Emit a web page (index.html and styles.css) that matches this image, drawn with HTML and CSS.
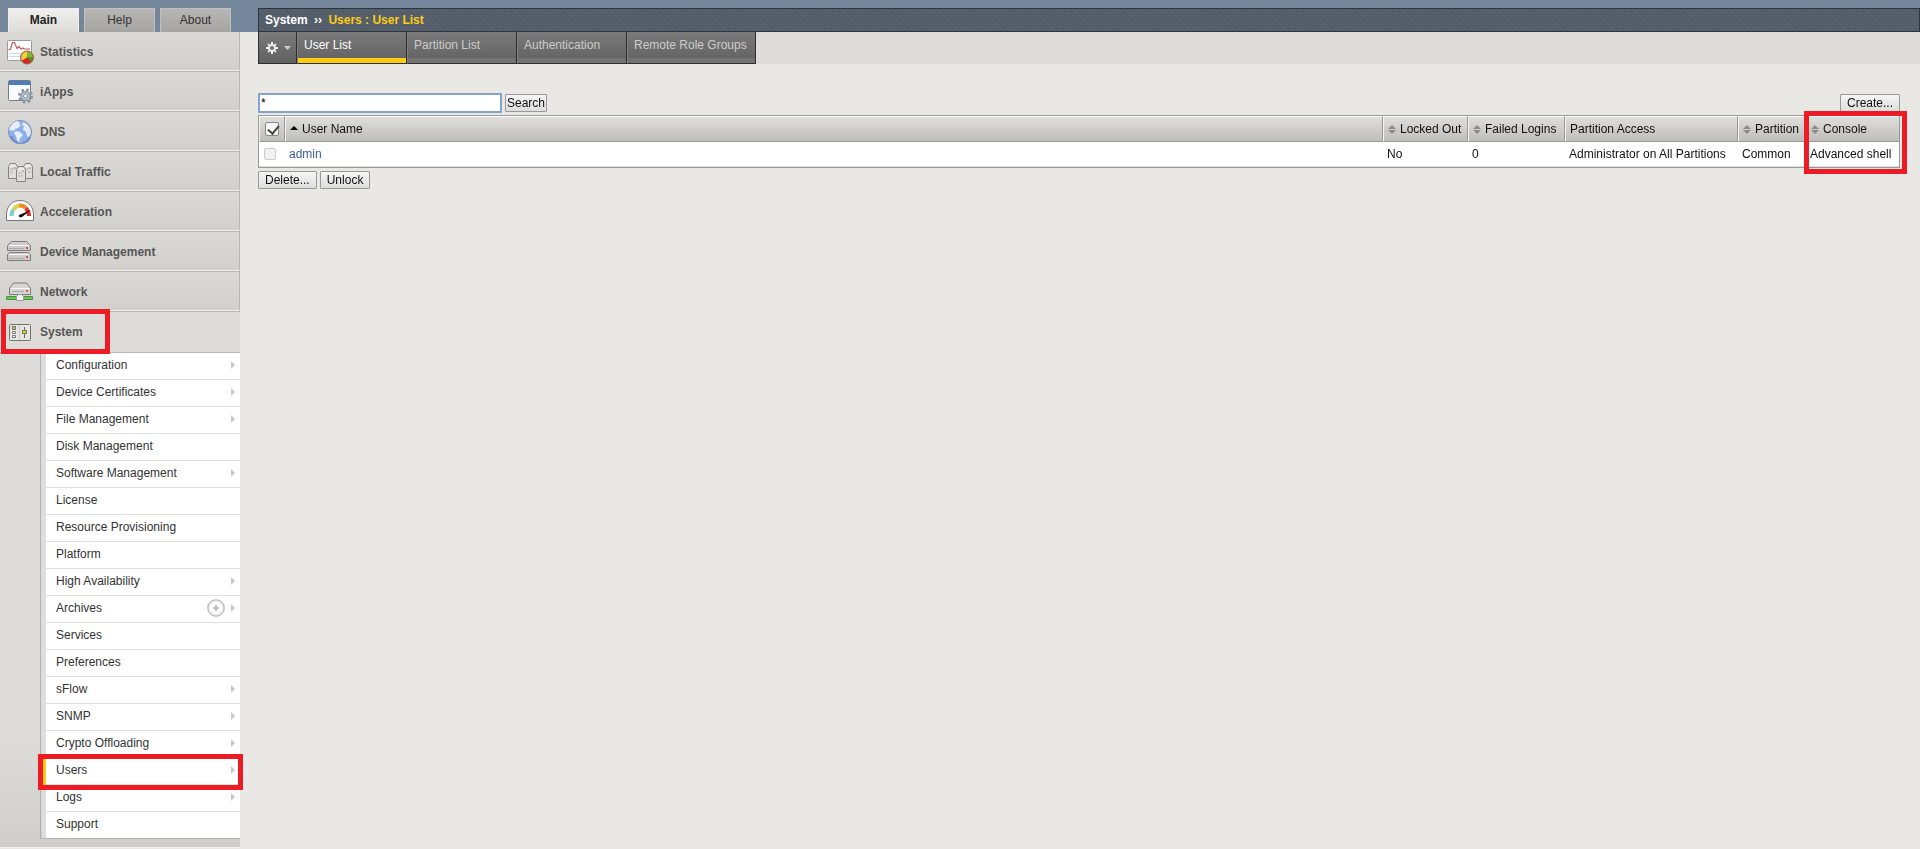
FILE: index.html
```html
<!DOCTYPE html>
<html lang="en">
<head>
    <meta charset="UTF-8">
    <meta name="viewport" content="width=device-width, initial-scale=1.0">
    <title>System - Users : User List</title>
    <link rel="stylesheet" href="styles.css">
</head>
<body>
    <div class="page">
        <aside class="sidebar">
            <nav class="panel-tabs">
                <a href="#" class="active">Main</a>
                <a href="#">Help</a>
                <a href="#">About</a>
            </nav>

            <ul class="main-menu">
                <li>
                    <a href="#">
                        <svg class="icon" width="28" height="28" viewBox="0 0 28 28">
                            <rect x="1.5" y="2.5" width="24" height="20" rx="1" fill="#fff" stroke="#9a9a9a"/>
                            <path d="M3 15.500h21M3 18.500h12" stroke="#c5dbe6"/>
                            <path d="M2.500 12l2-1 2-6.500 2 0 2.500 6 2-2 2 2.500 2-1 1 1h6" fill="none" stroke="#c4555d" stroke-width="1.200"/>
                            <circle cx="21" cy="19.500" r="6.500" fill="#d8262b" stroke="#8d6b3f"/>
                            <path d="M21 19.500V13.500a6 6 0 0 1 6 6z" fill="#79bd2c"/>
                            <path d="M21 19.500v-6a6 6 0 0 0-5 9z" fill="#f0cf3c"/>
                            <path d="M21 19.500h6a6 6 0 0 1-2 4z" fill="#479b2a"/>
                        </svg>
                        Statistics
                    </a>
                </li>
                <li>
                    <a href="#">
                        <svg class="icon" width="28" height="28" viewBox="0 0 28 28">
                            <rect x="2.5" y="2.5" width="22" height="20" rx="1" fill="#fafcff" stroke="#777b80"/>
                            <path d="M3 3h21v4H3z" fill="#4a7dbd"/>
                            <circle cx="19.500" cy="18" r="6" fill="none" stroke="#85939c" stroke-width="3" stroke-dasharray="2.4 2.310"/>
                            <circle cx="19.500" cy="18" r="4.500" fill="#b9c7cf" stroke="#8f9da6" stroke-width="1.500"/>
                            <circle cx="19.500" cy="18" r="2" fill="#eef3f5" stroke="#82909a"/>
                        </svg>
                        iApps
                    </a>
                </li>
                <li>
                    <a href="#">
                        <svg class="icon" width="28" height="28" viewBox="0 0 28 28">
                            <circle cx="14" cy="14" r="11.500" fill="#8fb0ec" stroke="#7c8db5"/>
                            <path d="M4 9l3-4 4-2 3 1-1 2 2 1-3 3-3 1-1 2-3-1-2 1z" fill="#e7effa"/>
                            <path d="M10 13l4 1 3 3-3 3-1 5-2-3-1-4-2-3z" fill="#e7effa"/>
                            <path d="M17 4l4 2 3 4 1 5-2 4-2-1-1-4-3-2 1-4-2-1z" fill="#e1eafa"/>
                            <path d="M5 18q2 5 7 7M17 25q5-1 7-6" fill="none" stroke="#6689d0" stroke-width="2"/>
                        </svg>
                        DNS
                    </a>
                </li>
                <li>
                    <a href="#">
                        <svg class="icon" width="28" height="28" viewBox="0 0 28 28">
                            <g fill="#deddd9" stroke="#85827f">
                                <path d="M2.500 20.500V8.500l2-3h5l2 3v12z"/>
                                <path d="M17.500 20.500V8.500l2-3h5l2 3v12z"/>
                                <path d="M10.500 23.500v-12l2-3h5l2 3v12z"/>
                            </g>
                            <path d="M4 8h6M19 8h6M12 11h6" stroke="#fff"/>
                            <path d="M4 11h4M20 11h3M12 15h4M4 14h3M22 14h3M12 18h5" stroke="#b5b3b0"/>
                            <path d="M8 10h2M23 10h2M16 13h2" stroke="#c27474"/>
                        </svg>
                        Local Traffic
                    </a>
                </li>
                <li>
                    <a href="#">
                        <svg class="icon" width="28" height="28" viewBox="0 0 28 28">
                            <path d="M.5 22.500V17C.5 8 6 2.500 14 2.500S27.500 8 27.500 17v5.500z" fill="#fff" stroke="#777"/>
                            <path d="M5.500 18q0-4 2-6.500" fill="none" stroke="#78d2d0" stroke-width="4"/>
                            <path d="M7.500 11.500q2-3 5.500-4" fill="none" stroke="#dbd342" stroke-width="4"/>
                            <path d="M13 7.500q5-.5 7 3" fill="none" stroke="#ef8b24" stroke-width="4"/>
                            <path d="M20 10.500q3 3 3 7.500" fill="none" stroke="#d82f28" stroke-width="4"/>
                            <path d="M13 17l12-5-9 7q-4 1-3-2z" fill="#111"/>
                        </svg>
                        Acceleration
                    </a>
                </li>
                <li>
                    <a href="#">
                        <svg class="icon" width="28" height="28" viewBox="0 0 28 28">
                            <g fill="#cdccca" stroke="#7d7d7d">
                                <path d="M1.500 12.500V7.500l4-4h15l4 4v5z"/>
                                <path d="M1.500 22.500v-6l2-2h19l2 2v6z"/>
                            </g>
                            <path d="M3 7.500h20M3 16.500h20" stroke="#f7f7f7"/>
                            <path d="M3 10.500h15M3 20.500h15" stroke="#aaa"/>
                            <path d="M20 10h2M20 19h2" stroke="#d35353" stroke-width="2"/>
                        </svg>
                        Device Management
                    </a>
                </li>
                <li>
                    <a href="#">
                        <svg class="icon" width="28" height="28" viewBox="0 0 28 28">
                            <path d="M3.500 16.500V10l4-5h13l4 5v6.500z" fill="#d6d5d3" stroke="#7d7d7d"/>
                            <path d="M5 10.500h19" stroke="#fafafa"/>
                            <path d="M6 13.500h12" stroke="#aaa"/>
                            <path d="M20 13h2" stroke="#d35353" stroke-width="2"/>
                            <path d="M.5 18.500h26v3H.5z" fill="#6cc35a" stroke="#4a9440"/>
                            <path d="M10.500 22.500v-4l2-2h3l2 2v4z" fill="#f2f2f2" stroke="#999"/>
                        </svg>
                        Network
                    </a>
                </li>
                <li class="open">
                    <a href="#">
                        <svg class="icon" width="28" height="28" viewBox="0 0 28 28">
                            <rect x="3.500" y="6.500" width="21" height="16" rx="1" fill="#e7e6e2" stroke="#737373"/>
                            <path d="M13.500 7v15" stroke="#c9c9c9"/>
                            <rect x="6.500" y="8.500" width="3" height="3" fill="#c7ca32" stroke="#777"/>
                            <path d="M6.500 13.500h3v2h-3zM6.500 17.500h3v2h-3z" fill="#fff" stroke="#777"/>
                            <path d="M18.500 9v11" stroke="#666"/>
                            <rect x="16.500" y="12.500" width="4" height="3" fill="#c9d34b" stroke="#73813a"/>
                        </svg>
                        System
                    </a>
                    <span class="callout callout-system"></span>
                    <ul class="sub-menu">
                        <li><a href="#" class="more">Configuration</a></li>
                        <li><a href="#" class="more">Device Certificates</a></li>
                        <li><a href="#" class="more">File Management</a></li>
                        <li><a href="#">Disk Management</a></li>
                        <li><a href="#" class="more">Software Management</a></li>
                        <li><a href="#">License</a></li>
                        <li><a href="#">Resource Provisioning</a></li>
                        <li><a href="#">Platform</a></li>
                        <li><a href="#" class="more">High Availability</a></li>
                        <li>
                            <a href="#" class="more">
                                Archives
                                <svg class="add" width="18" height="18" viewBox="0 0 18 18">
                                    <circle cx="9" cy="9" r="8" fill="none" stroke="#c9c9c9" stroke-width="2"/>
                                    <path d="M9 6v6M6 9h6" stroke="#bdbdbd" stroke-width="2"/>
                                </svg>
                            </a>
                        </li>
                        <li><a href="#">Services</a></li>
                        <li><a href="#">Preferences</a></li>
                        <li><a href="#" class="more">sFlow</a></li>
                        <li><a href="#" class="more">SNMP</a></li>
                        <li><a href="#" class="more">Crypto Offloading</a></li>
                        <li class="current">
                            <a href="#" class="more">Users</a>
                            <span class="callout callout-users"></span>
                        </li>
                        <li><a href="#" class="more">Logs</a></li>
                        <li><a href="#">Support</a></li>
                    </ul>
                </li>
            </ul>
        </aside>

        <main>
            <header class="breadcrumb">
                <h1>System <span class="sep">››</span> <span class="trail">Users : User List</span></h1>
            </header>

            <nav class="tab-bar">
                <button type="button" class="gear" aria-label="Options">
                    <svg width="12" height="12" viewBox="0 0 12 12">
                        <circle cx="6" cy="6" r="3" fill="none" stroke="#eee" stroke-width="2"/>
                        <path d="M6 0v2M6 10v2M0 6h2M10 6h2M2 2l1 1M9 9l1 1M10 2L9 3M3 9l-1 1" stroke="#eee" stroke-width="2"/>
                    </svg>
                    <svg width="7" height="4" viewBox="0 0 7 4"><path d="M0 0h7L3.500 4z" fill="#ccc"/></svg>
                </button>
                <a href="#" class="active">User List</a>
                <a href="#">Partition List</a>
                <a href="#">Authentication</a>
                <a href="#">Remote Role Groups</a>
            </nav>

            <form class="content">
                <div class="toolbar">
                    <input type="text" class="search" aria-label="Search users" value="*" autofocus>
                    <button type="button" class="btn tight">Search</button>
                    <button type="button" class="btn create">Create...</button>
                </div>

                <div class="table-wrap">
                    <table>
                        <thead>
                            <tr>
                                <th class="check"><input type="checkbox" aria-label="Select all" checked></th>
                                <th class="name"><svg class="up" width="8" height="4" viewBox="0 0 8 4"><path d="M0 4h8L4 0z"/></svg>User Name</th>
                                <th class="locked"><svg class="sort" width="8" height="9" viewBox="0 0 8 9"><path d="M0 4h8L4 0zM0 5h8L4 9z"/></svg>Locked Out</th>
                                <th class="failed"><svg class="sort" width="8" height="9" viewBox="0 0 8 9"><path d="M0 4h8L4 0zM0 5h8L4 9z"/></svg>Failed Logins</th>
                                <th class="access">Partition Access</th>
                                <th class="partition"><svg class="sort" width="8" height="9" viewBox="0 0 8 9"><path d="M0 4h8L4 0zM0 5h8L4 9z"/></svg>Partition</th>
                                <th class="console"><svg class="sort" width="8" height="9" viewBox="0 0 8 9"><path d="M0 4h8L4 0zM0 5h8L4 9z"/></svg>Console</th>
                            </tr>
                        </thead>
                        <tbody>
                            <tr>
                                <td class="check"><input type="checkbox" aria-label="Select admin" disabled></td>
                                <td><a href="#">admin</a></td>
                                <td>No</td>
                                <td>0</td>
                                <td>Administrator on All Partitions</td>
                                <td>Common</td>
                                <td>Advanced shell</td>
                            </tr>
                        </tbody>
                    </table>
                    <span class="callout callout-console"></span>
                </div>

                <div class="actions">
                    <button type="button" class="btn">Delete...</button>
                    <button type="button" class="btn">Unlock</button>
                </div>
            </form>
        </main>
    </div>
</body>
</html>
```
FILE: styles.css
```css
:root {
    --band: #76879b;
    --page-bg: #e9e8e4;
    --menu-bg: #dddcd8;
    --line: #b7b6b2;
    --yellow: #fc1;
    --callout: #ed1c24;
}

* {
    margin: 0;
    padding: 0;
    box-sizing: border-box;
}

body {
    font-family: "Liberation Sans", Arial, sans-serif;
    font-size: 12px;
    line-height: 16px;
    color: #111;
    background: var(--page-bg);
}

a {
    color: inherit;
    text-decoration: none;
}

ul {
    list-style: none;
}

.page {
    display: grid;
    grid-template-columns: 240px minmax(0, 1fr);
    min-height: 100vh;
    background: repeating-linear-gradient(45deg, #73859a 0 2px, var(--band) 2px 4px) top / 100% 32px no-repeat;
}

/* Red outlines over the items being pointed out */
.callout {
    position: absolute;
    border: 5px solid var(--callout);
    pointer-events: none;
    z-index: 2;
}

/* Sidebar */
.panel-tabs {
    display: flex;
    gap: 5px;
    height: 32px;
    padding: 8px 8px 0;
}

.panel-tabs a {
    width: 71px;
    padding-top: 3px;
    text-align: center;
    color: #333;
    background: linear-gradient(#b7b6b3, #a5a4a1);
    border: 1px solid #bfc1c1;
    border-bottom: 0;
}

.panel-tabs .active {
    font-weight: bold;
    color: #222;
    background: linear-gradient(#f0efed, #dddcd8);
    border-color: #eee;
}

.main-menu > li {
    position: relative;
}

.main-menu > li > a {
    display: flex;
    align-items: center;
    gap: 6px;
    height: 40px;
    padding: 1px 0 0 6px;
    font-weight: bold;
    color: #555;
    background: linear-gradient(#dad9d5, #d1d0cc);
    border-top: 1px solid var(--line);
    border-right: 1px solid var(--line);
    border-bottom: 1px solid #f2f1ef;
}

.main-menu > li:first-child > a {
    height: 39px;
    border-top: 0;
}

.icon {
    flex: none;
}

.main-menu > .open {
    padding-bottom: 8px;
    background: linear-gradient(var(--menu-bg) 80%, #cfceca);
    border-bottom: 1px solid #f2f1ef;
}

.main-menu > .open > a {
    height: 42px;
    padding-top: 0;
    background: none;
    border-right: 0;
    border-bottom-color: var(--line);
}

.callout-system {
    top: -2px;
    left: 1px;
    width: 109px;
    height: 45px;
}

.sub-menu {
    margin-left: 40px;
    padding-left: 1px;
    border-left: 1px solid #b3b2b0;
    border-bottom: 1px solid var(--line);
}

.sub-menu li {
    position: relative;
    border-left: 4px solid #dedde0;
}

.sub-menu .current {
    border-left-color: var(--yellow);
}

.sub-menu a {
    display: flex;
    align-items: center;
    height: 27px;
    padding: 0 5px 2px 10px;
    color: #333;
    background: #fff;
    border-bottom: 1px solid #e0e0e0;
}

.sub-menu li:last-child a {
    height: 26px;
    border-bottom: 0;
}

.sub-menu .more::after {
    content: "";
    margin-left: auto;
    border: 4px solid transparent;
    border-left-color: #c8c8c8;
    border-right: 0;
}

.sub-menu .add {
    margin-left: auto;
}

.sub-menu .more:has(.add)::after {
    margin-left: 6px;
}

.callout-users {
    top: -4px;
    left: -8px;
    right: -3px;
    height: 36px;
}

/* Main column */
main {
    padding: 8px 0 0 18px;
}

.breadcrumb {
    height: 24px;
    padding: 2px 6px;
    background: repeating-linear-gradient(45deg, #535d6a 0 2px, #57606d 2px 4px);
    border: 1px solid #2d343b;
}

.breadcrumb h1 {
    font-size: 12px;
    line-height: 18px;
    color: #fff;
}

.breadcrumb .sep {
    margin: 0 3px;
}

.breadcrumb .trail {
    color: var(--yellow);
}

.tab-bar {
    display: flex;
    height: 32px;
    background: var(--menu-bg);
}

.tab-bar a,
.gear {
    border: 0 solid #2e2e2e;
    border-right-width: 1px;
    border-bottom-width: 1px;
    background: linear-gradient(#7b7b7b, #606060);
}

.tab-bar a {
    min-width: 110px;
    padding: 5px 7px 0 6px;
    color: #ccc;
    border-left: 1px solid #808080;
    box-shadow: inset 0 -5px #747474;
}

.tab-bar a:last-child {
    padding-right: 8px;
}

.tab-bar .active {
    color: #fff;
    box-shadow: inset 0 -5px var(--yellow);
}

.gear {
    display: flex;
    align-items: center;
    gap: 6px;
    width: 39px;
    padding-left: 7px;
    border-left-width: 1px;
}

.content {
    padding: 29px 20px 0 0;
}

.toolbar {
    display: flex;
    align-items: center;
    gap: 3px;
    margin-bottom: 2px;
}

.search {
    width: 244px;
    height: 20px;
    padding: 0 1px;
    font: inherit;
    background: #fff;
    border: 2px solid #84a3ce;
    outline: 0;
}

.btn {
    height: 18px;
    padding: 0 6px;
    font: inherit;
    line-height: 16px;
    color: #111;
    background: linear-gradient(#f6f6f6, #ddd);
    border: 1px solid #999;
    border-radius: 1px;
}

.btn.tight {
    padding: 0 1px;
}

.create {
    margin-left: auto;
}

.table-wrap {
    position: relative;
}

table {
    width: 100%;
    table-layout: fixed;
    border-collapse: separate;
    border-spacing: 0;
    border: 1px solid #999;
    background: #fff;
}

th,
td {
    padding: 0 4px;
    text-align: left;
    font-weight: normal;
    white-space: nowrap;
}

th {
    height: 26px;
    padding-bottom: 1px;
    background: linear-gradient(#dfdeda, #bfbebb);
    border-top: 1px solid #fff;
    border-bottom: 1px solid #999;
    border-left: 1px solid #f4f4f2;
    border-right: 1px solid #999;
}

th:last-child {
    border-right: 0;
}

td {
    height: 25px;
    border-bottom: 1px solid #ddd;
}

td a {
    color: #3f5b9e;
}

th.check { width: 26px; }
th.locked { width: 85px; }
th.failed { width: 97px; }
th.access { width: 173px; }
th.partition { width: 68px; }
th.console { width: 93px; }

.check input {
    display: block;
    appearance: none;
    width: 12px;
    height: 12px;
    margin-left: 1px;
    background: #f1f1f1;
    border: 1px solid #ccc;
    border-radius: 2px;
}

.check input:checked {
    width: 14px;
    height: 14px;
    background: #f6f6f6;
    border-color: #888;
}

.check input:checked::after {
    content: "";
    display: block;
    width: 5px;
    height: 9px;
    margin: 0 0 0 4px;
    border: solid #444;
    border-width: 0 2px 2px 0;
    transform: rotate(40deg);
}

.sort,
.up {
    margin-right: 4px;
    fill: #8b8b89;
}

.sort {
    vertical-align: -1px;
}

.up {
    vertical-align: 3px;
    fill: #000;
}

.callout-console {
    top: -4px;
    right: -7px;
    width: 103px;
    height: 63px;
}

.actions {
    display: flex;
    gap: 3px;
    margin-top: 3px;
}
```
